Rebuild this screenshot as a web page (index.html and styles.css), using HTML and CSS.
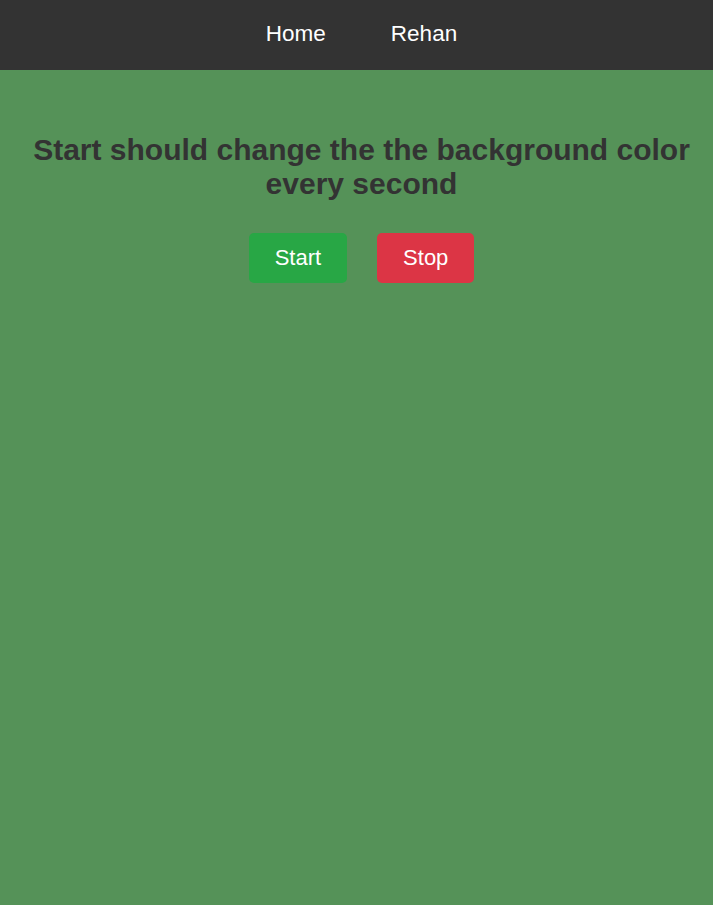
FILE: index.html
```html
<!DOCTYPE html>
<html lang="en">
<head>
<meta charset="utf-8">
<title>Color Changer</title>
<link rel="stylesheet" href="styles.css">
</head>
<body>
<nav class="navbar">
  <a class="nav-link" href="#">Home</a>
  <a class="nav-link" href="#">Rehan</a>
</nav>
<main class="content">
  <h1 class="title">Start should change the the background color every second</h1>
  <div class="actions">
    <button class="btn btn-start">Start</button>
    <button class="btn btn-stop">Stop</button>
  </div>
</main>
</body>
</html>
```
FILE: styles.css
```css
html, body {
  margin: 0;
  padding: 0;
  height: 100%;
}
body {
  background: #559258;
  font-family: "Liberation Sans", Arial, sans-serif;
}
.navbar {
  height: 70px;
  box-sizing: border-box;
  padding: 0 0 2px 10px;
  background: #333333;
  display: flex;
  justify-content: center;
  align-items: center;
  gap: 65px;
}
.nav-link {
  color: #ffffff;
  text-decoration: none;
  font-size: 22.5px;
}
.content {
  padding: 63px 10px 0 20px;
  text-align: center;
}
.title {
  margin: 0;
  font-size: 30px;
  font-weight: bold;
  color: #333333;
  line-height: normal;
}
.actions {
  margin-top: 32px;
  display: flex;
  justify-content: center;
  gap: 30px;
}
.btn {
  height: 50px;
  padding: 0 26px;
  border: none;
  border-radius: 5px;
  color: #ffffff;
  font-family: "Liberation Sans", Arial, sans-serif;
  font-size: 22px;
  cursor: pointer;
}
.btn-start { background: #28a745; }
.btn-stop { background: #dc3545; }
```
